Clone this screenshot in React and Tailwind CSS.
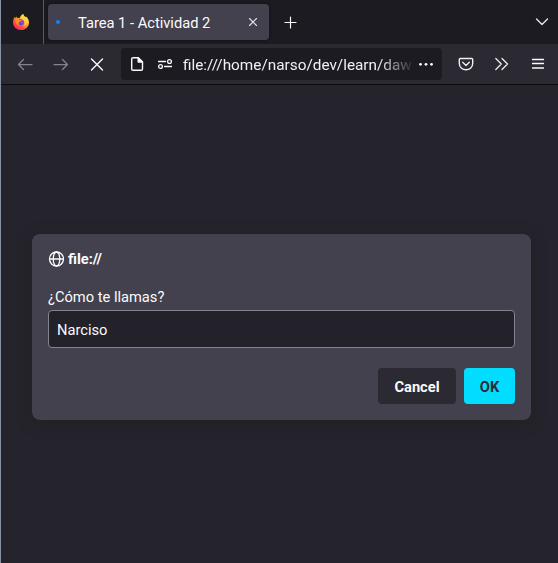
import React from "react";

function Icon({ className = "", children, w = 16, h = 16, stroke = 1.25 }) {
  return (
    <svg
      className={`shrink-0 ${className}`}
      width={w}
      height={h}
      viewBox={`0 0 ${w} ${h}`}
      fill="none"
      stroke="currentColor"
      strokeWidth={stroke}
      strokeLinecap="round"
      strokeLinejoin="round"
    >
      {children}
    </svg>
  );
}

function FirefoxLogo() {
  return (
    <svg className="shrink-0" width="16" height="16" viewBox="0 0 16 16">
      <defs>
        <linearGradient id="flame" x1="0.85" y1="0.05" x2="0.2" y2="0.95">
          <stop offset="0" stopColor="#fff44f" />
          <stop offset="0.35" stopColor="#ffc02e" />
          <stop offset="0.65" stopColor="#ff6034" />
          <stop offset="1" stopColor="#f0206a" />
        </linearGradient>
        <linearGradient id="globe" x1="0.8" y1="0" x2="0.3" y2="1">
          <stop offset="0" stopColor="#b04de0" />
          <stop offset="1" stopColor="#5b3fd8" />
        </linearGradient>
      </defs>
      <path
        fill="url(#flame)"
        d="M10.200 0c.2 1.600 1.200 2.300 2.200 3.200L13 2.500c1.600 1.200 3 3.700 3 5.900C16 12.700 12.500 16 8.100 16S0 12.700 0 8.400C0 6 .9 4 2 2.800l.2 1.400L3.500 2.500l.4 1.400c1-.2 1.900 0 2.600.4C7.300 2.300 8.800 1 10.200 0z"
      />
      <circle cx="8" cy="8" r="3.200" fill="url(#globe)" />
      <path fill="#ff8a2b" d="M2.500 5.200C4 4.600 5.500 4.800 6.500 5.800l2 .2c-.2.900-1.100 1-1.800 1.400-.6.500-.2 1.200-1 1.500-.5 1.500.8 2.500 2.400 2.600-3 .5-5.600-1.400-5.600-3.500z" />
      <path fill="#ffd23a" d="M10.200 0c.2 1.600 1.200 2.300 2.200 3.200 1.600 1.700 2.200 4.200 1 6.600-.7 1.500-2 2.300-3.300 2.500 2-1.300 2.400-3.500 1.400-5.100C10.500 5.700 7.800 5.500 7.400 4c0-1.700 1.400-3 2.800-4z" />
    </svg>
  );
}

function TabBar() {
  return (
    <div className="flex h-[44px] bg-[#1c1b22]">
      <div className="flex w-[43px] items-center border-r border-[#5b5a63] pl-3">
        <FirefoxLogo />
      </div>
      <div className="mt-1 ml-1 flex h-9 w-[221px] items-center rounded bg-[#42414d] shadow-[0_0_4px_rgba(0,0,0,0.4)]">
        <span className="ml-2 h-1 w-1 rounded-full bg-[#0a84ff]" />
        <span className="ml-[18px] flex-1 whitespace-nowrap pt-0.5">Tarea 1 - Actividad 2</span>
        <Icon className="mr-2 text-[#e4e4e9]" stroke={1.1}>
          <path d="M4.500 4.500l7 7M11.500 4.500l-7 7" />
        </Icon>
      </div>
      <div className="flex flex-1 items-center justify-between pl-3.5 pr-2">
        <Icon className="mt-0.5" stroke={1.2}>
          <path d="M7.500 2v11M2 7.500h11" />
        </Icon>
        <Icon className="text-[#e4e4e9]" stroke={1.35}>
          <path d="M2.500 5L8 10.500l5.500-5.500" />
        </Icon>
      </div>
    </div>
  );
}

function NavBar() {
  return (
    <div className="flex h-[41px] items-center border-b border-[#0c0c0d] bg-[#2b2a33]">
      <Icon className="ml-4 text-[#85848c]">
        <path d="M15 8.500H1.500M6.500 3.500l-5 5 5 5" />
      </Icon>
      <Icon className="ml-5 text-[#85848c]">
        <path d="M1 8.500h13.500M9.500 3.500l5 5-5 5" />
      </Icon>
      <Icon className="ml-5" stroke={1.4}>
        <path d="M2.500 3l11 11M13.500 3l-11 11" />
      </Icon>
      <div className="ml-4 flex h-8 w-[321px] items-center rounded bg-[#1c1b22]">
        <Icon className="ml-2" stroke={1.400}>
          <path d="M4 1.700H9.200L13.500 6v7a1.300 1.300 0 01-1.300 1.300H4A1.300 1.300 0 012.700 13V3A1.300 1.300 0 014 1.700z" />
          <path fill="currentColor" d="M9.200 1.700V6h4.300z" />
        </Icon>
        <Icon className="ml-3" stroke={1.3}>
          <path d="M1.500 5.500h7M7.500 10.500h7" />
          <circle cx="12.500" cy="5.500" r="1.900" />
          <circle cx="3.500" cy="10.500" r="1.900" />
        </Icon>
        <div className="ml-2.5 w-[229px] overflow-hidden whitespace-nowrap pt-0.5 text-[15.333px] text-[#f0f0f4] [mask-image:linear-gradient(to_right,black_195px,transparent_232px)]">
          file:///home/narso/dev/learn/daw
        </div>
        <Icon className="ml-1.5">
          <g fill="currentColor" stroke="none">
            <circle cx="2.500" cy="8.300" r="1.400" />
            <circle cx="8" cy="8.300" r="1.400" />
            <circle cx="13.500" cy="8.300" r="1.400" />
          </g>
        </Icon>
      </div>
      <Icon className="ml-4 text-[#eeeef2]" stroke={1.400}>
        <path d="M2.300 2.500h11.400a1 1 0 011 1V7.500a6.700 6.300 0 01-13.400 0V3.500a1 1 0 011-1z" />
        <path d="M4.700 6.300L8 9.400l3.300-3.100" />
      </Icon>
      <Icon className="ml-5 text-[#eeeef2]">
        <path d="M1.800 2.500L7.300 8l-5.500 5.500M8 2.500L13.500 8 8 13.500" />
      </Icon>
      <Icon className="ml-5" stroke={1.3}>
        <path d="M2.500 3.500h11M2.500 7.500h11M2.500 12h11" />
      </Icon>
    </div>
  );
}

function PromptDialog() {
  return (
    <div className="mt-[149px] ml-[31px] flex h-[186px] w-[499px] flex-col rounded-lg bg-[#42414d] px-4 pt-4 shadow-[0_2px_14px_rgba(32,32,32,0.9)]">
      <div className="flex h-[18px] items-center gap-1 font-bold">
        <Icon stroke={1.3}>
          <circle cx="8.500" cy="8" r="7" />
          <ellipse cx="8.500" cy="8" rx="3.300" ry="7" />
          <path d="M1.800 8h13.400" />
        </Icon>
        <span>file://</span>
      </div>
      <div className="mt-5 h-[18px] leading-[18px]">¿Cómo te llamas?</div>
      <input
        className="mt-1 h-[38px] w-full rounded border border-[#85848e] bg-[#23222b] px-2 pt-0.5 outline-none"
        defaultValue="Narciso"
      />
      <div className="mt-5 flex justify-end gap-2 font-bold">
        <button className="h-9 w-[78px] rounded bg-[#2b2a33] pt-0.5">Cancel</button>
        <button className="h-9 w-[51px] rounded bg-[#00ddff] pt-0.5 text-[#2b2a33]">OK</button>
      </div>
    </div>
  );
}

export default function App() {
  return (
    <div className="h-[563px] w-[558px] overflow-hidden border-l border-[#8793a5] bg-[#25242d] font-['Roboto',sans-serif] text-[14.667px] leading-[18px] text-[#fbfbfe]">
      <TabBar />
      <NavBar />
      <PromptDialog />
    </div>
  );
}
